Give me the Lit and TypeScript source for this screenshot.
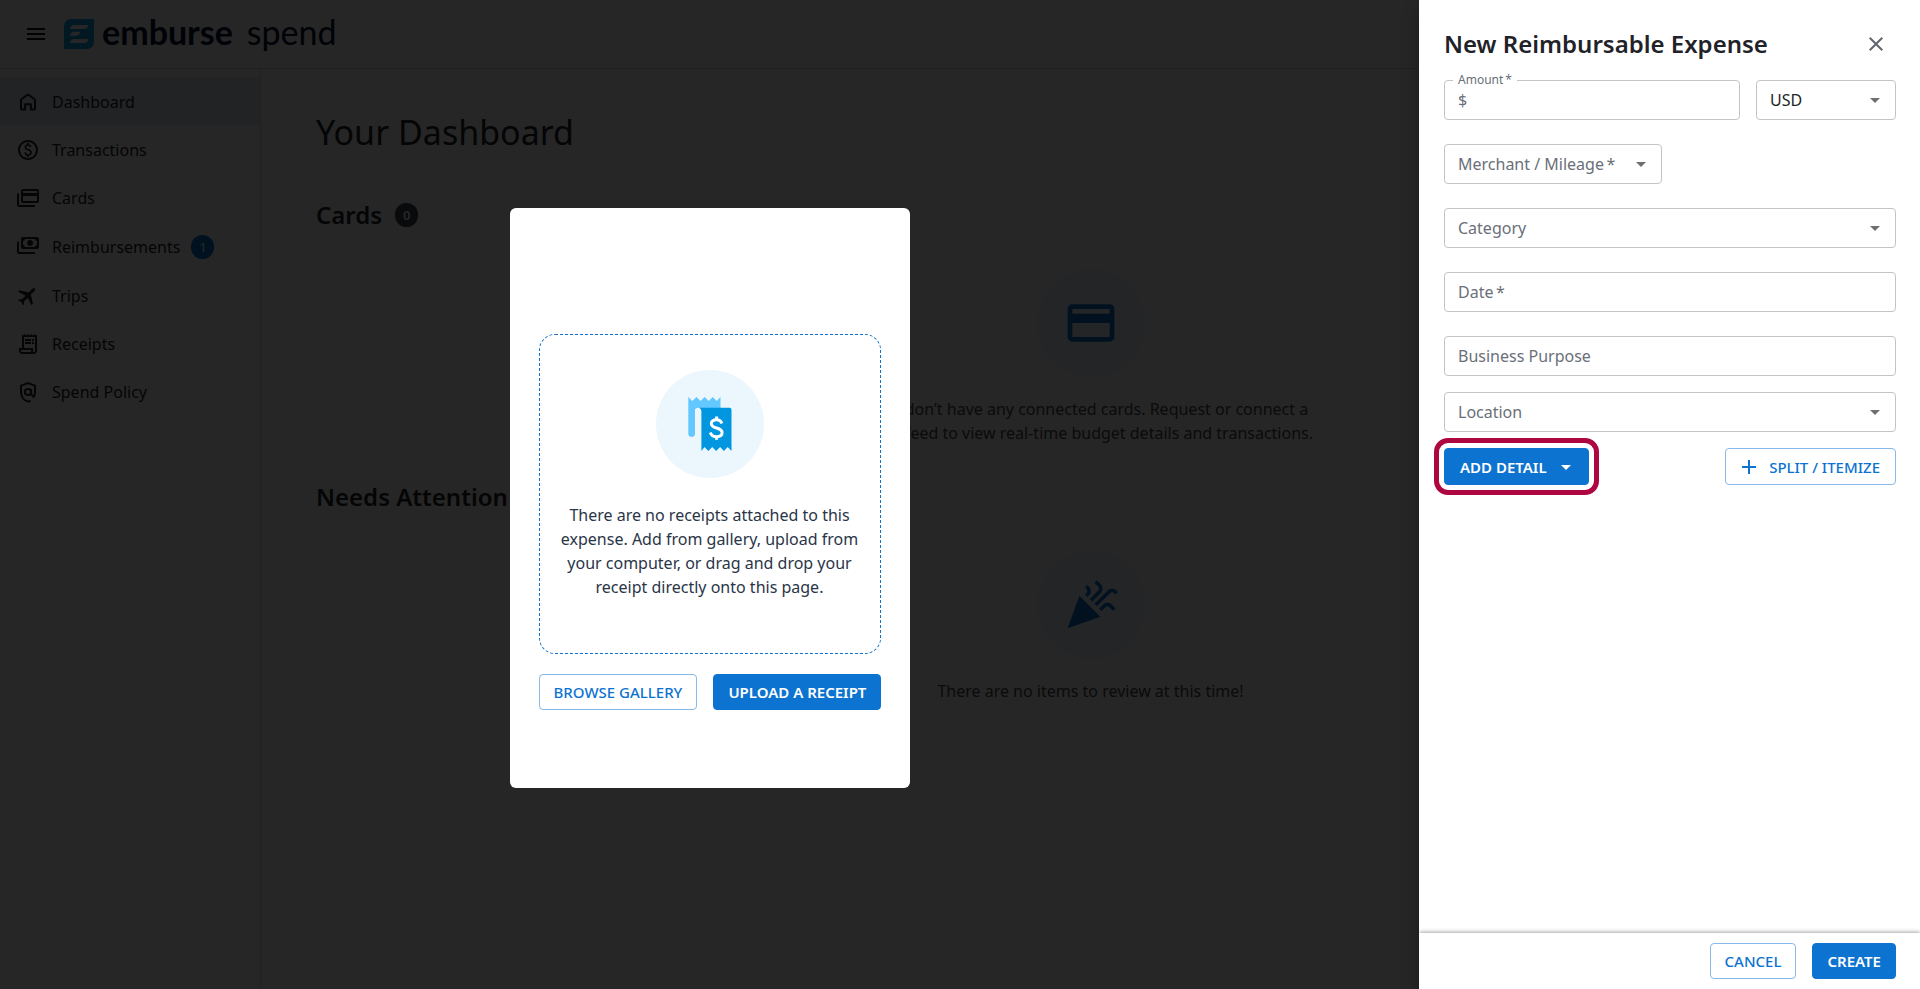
import { LitElement, html, css, svg, nothing } from "lit";
import { customElement, property } from "lit/decorators.js";

const PAID =
  "M12 2C6.48 2 2 6.48 2 12s4.48 10 10 10 10-4.48 10-10S17.52 2 12 2zm0 18c-4.41 0-8-3.59-8-8s3.59-8 8-8 8 3.59 8 8-3.59 8-8 8zm.89-8.9c-1.78-.59-2.64-.96-2.64-1.9 0-1.02 1.11-1.39 1.81-1.39 1.31 0 1.79.99 1.9 1.34l1.58-.67c-.15-.44-.82-1.91-2.66-2.23V5h-1.75v1.26c-2.6.56-2.62 2.85-2.62 2.96 0 2.27 2.25 2.91 3.35 3.31 1.58.56 2.28 1.07 2.28 2.03 0 1.13-1.05 1.61-1.98 1.61-1.82 0-2.34-1.87-2.4-2.09l-1.66.67c.63 2.19 2.28 2.78 3.02 2.96V19h1.75v-1.24c.52-.09 3.02-.59 3.02-3.22.01-1.39-.6-2.61-3-3.44z";
const FLIGHT =
  "M21 16v-2l-8-5V3.5c0-.83-.67-1.5-1.5-1.5S10 2.67 10 3.5V9l-8 5v2l8-2.5V19l-2 1.5V22l3.5-1 3.5 1v-1.5L13 19v-5.5l8 2.5z";
const RECEIPT =
  "M19.5 3.5 18 2l-1.5 1.5L15 2l-1.5 1.5L12 2l-1.5 1.5L9 2 7.5 3.5 6 2v14H3v3c0 1.66 1.34 3 3 3h12c1.66 0 3-1.34 3-3V2l-1.5 1.5zM15 20H6c-.55 0-1-.45-1-1v-1h10v2zm4-1c0 .55-.45 1-1 1s-1-.45-1-1v-3H8V5h11v14zM9 7h6v2H9zM16 7h2v2h-2zM9 10h6v2H9zM16 10h2v2h-2z";
const CREDIT_CARD =
  "M20 4H4c-1.11 0-1.99.89-1.99 2L2 18c0 1.11.89 2 2 2h16c1.11 0 2-.89 2-2V6c0-1.11-.89-2-2-2zm0 14H4v-6h16v6zm0-10H4V6h16v2z";
const CELEBRATION =
  "M2 22l14-5-9-9zM14.53 12.53l5.59-5.59c.49-.49 1.28-.49 1.77 0l.59.59 1.06-1.06-.59-.59c-1.07-1.07-2.82-1.07-3.89 0l-5.59 5.59 1.06 1.06zM10.06 6.88l-.59.59 1.06 1.06.59-.59c1.07-1.07 1.07-2.82 0-3.89l-.59-.59-1.06 1.07.59.59c.48.48.48 1.28 0 1.76zM17.06 11.88l-1.59 1.59 1.06 1.06 1.59-1.59c.49-.49 1.28-.49 1.77 0l1.61 1.61 1.06-1.06-1.61-1.61c-1.08-1.07-2.82-1.07-3.9 0zM15.06 5.88l-3.59 3.59 1.06 1.06 3.59-3.59c1.07-1.07 1.07-2.82 0-3.89l-1.59-1.59-1.06 1.06 1.59 1.59c.49.49.49 1.29 0 1.77z";

const glyphs: Record<string, unknown> = {
  menu: svg`<path d="M3 18h18v-2H3v2zm0-5h18v-2H3v2zm0-7v2h18V6H3z"/>`,
  home: svg`<path fill="none" stroke="currentColor" stroke-width="2" stroke-linejoin="round" d="M5 18.6V10.4q0-.9.7-1.4l5.4-4q.9-.6 1.8 0l5.4 4q.7.5.7 1.4v8.2q0 .9-.9.9H14.9V14.2H9.1V19.5H5.9Q5 19.5 5 18.6z"/>`,
  paid: svg`<path d=${PAID}/>`,
  cards: svg`<g fill="none" stroke="currentColor" stroke-width="2"><rect x="6" y="4" width="16" height="12" rx="1"/><path d="M2 7.500V19q0 1 1 1H19"/></g><path d="M6 7h16v3H6z"/>`,
  cash: svg`<g fill="none" stroke="currentColor" stroke-width="2"><path d="M2 6.500V17q0 1 1 1H19"/></g><path fill-rule="evenodd" d="M7 2h14a2 2 0 0 1 2 2v8a2 2 0 0 1-2 2H7a2 2 0 0 1-2-2V4a2 2 0 0 1 2-2zM9 4a2 2 0 0 1-2 2v4a2 2 0 0 1 2 2h10a2 2 0 0 1 2-2V6a2 2 0 0 1-2-2z"/><circle cx="14" cy="8" r="3"/>`,
  flight: svg`<path transform="rotate(45 12 12)" d=${FLIGHT}/>`,
  receipt: svg`<path d=${RECEIPT}/>`,
  policy: svg`<g fill="none" stroke="currentColor" stroke-width="2"><path d="M14.500 20.600Q13.300 21.400 12 21.600C7.500 20.300 5 16.200 5 12V5.600L12 3l7 2.600V12c0 1.800-.4 3.400-1.200 4.900L14.600 13.800"/><circle cx="12" cy="12" r="3.100"/><path d="M15.100 9v5"/></g>`,
  card: svg`<path d=${CREDIT_CARD}/>`,
  party: svg`<path d=${CELEBRATION}/>`,
  caret: svg`<path d="M7 10l5 5 5-5z"/>`,
  plus: svg`<path d="M19 13h-6v6h-2v-6H5v-2h6V5h2v6h6z"/>`,
  close: svg`<path d="M19 6.410 17.590 5 12 10.590 6.410 5 5 6.410 10.590 12 5 17.590 6.410 19 12 13.410 17.590 19 19 17.590 13.410 12z"/>`,
};

const icon = (name: string, cls = "") =>
  html`<svg class="icon ${cls}" viewBox="0 0 24 24" aria-hidden="true">${glyphs[name]}</svg>`;

const required = html`<span aria-hidden="true">&thinsp;*</span>`;

@customElement("form-field")
class FormField extends LitElement {
  @property() label = "";
  @property() kind: "text" | "select" = "text";
  @property() value = "";
  @property() prefixText = "";
  @property({ type: Boolean }) required = false;
  @property({ type: Boolean }) floating = false;
  @property({ type: Boolean }) bare = false;

  static styles = css`
    :host {
      display: block;
    }
    .field {
      position: relative;
      display: grid;
      grid-template-columns: auto 1fr;
      align-items: center;
      box-sizing: border-box;
      height: 40px;
      border: 1px solid #c4c4c4;
      border-radius: 4px;
    }
    .label,
    .control {
      grid-row: 1;
      font: 16px/24px "Noto Sans", sans-serif;
    }
    .label {
      grid-column: 1;
      padding: 0 14px 0 13px;
      color: #6a6f79;
      pointer-events: none;
      white-space: nowrap;
      z-index: 1;
    }
    .label.float {
      position: absolute;
      grid-area: auto;
      left: 8px;
      top: -9px;
      padding: 0 5px;
      background: #fff;
      font-size: 12px;
      line-height: 16px;
    }
    .prefix {
      grid-row: 1;
      grid-column: 1;
      padding-left: 13px;
      font: 16px/24px "Noto Sans", sans-serif;
      color: #6a6f79;
    }
    .control {
      grid-column: 1 / -1;
      width: 100%;
      min-width: 0;
      height: 38px;
      box-sizing: border-box;
      margin: 0;
      padding: 0 13px;
      border: 0;
      outline: 0;
      border-radius: 4px;
      background: transparent;
      color: #212529;
      appearance: none;
    }
    .control.after {
      grid-column: 2;
    }
    .caret {
      grid-row: 1;
      grid-column: 2;
      justify-self: end;
      width: 24px;
      height: 24px;
      margin-right: 8px;
      fill: #6f6f6f;
      pointer-events: none;
    }
  `;

  render() {
    return html`
      <div class="field">
        ${this.bare
          ? nothing
          : html`<label class="label ${this.floating ? "float" : ""}" for="c"
              >${this.label}${this.required ? required : nothing}</label
            >`}
        ${this.prefixText ? html`<span class="prefix">${this.prefixText}</span>` : nothing}
        ${this.kind === "select"
          ? html`<select class="control" id="c" aria-label=${this.bare ? this.label : nothing}>
                <option>${this.value}</option>
              </select>
              ${icon("caret", "caret")}`
          : html`<input
              class="control ${this.prefixText ? "after" : ""}"
              id="c"
              type="text"
              ?required=${this.required}
            />`}
      </div>
    `;
  }
}

const NAV = [
  { label: "Dashboard", icon: "home", active: true },
  { label: "Transactions", icon: "paid" },
  { label: "Cards", icon: "cards" },
  { label: "Reimbursements", icon: "cash", count: 1 },
  { label: "Trips", icon: "flight" },
  { label: "Receipts", icon: "receipt" },
  { label: "Spend Policy", icon: "policy" },
];

@customElement("app-root")
class AppRoot extends LitElement {
  static styles = css`
    :host {
      display: block;
      height: 100vh;
      position: relative;
      overflow: hidden;
      background: #fff;
      color: #212529;
      font: 16px/24px "Noto Sans", sans-serif;
    }
    h1,
    h2,
    p {
      margin: 0;
    }
    .icon {
      display: block;
      flex: none;
      width: 24px;
      height: 24px;
      fill: currentColor;
    }
    .page {
      display: grid;
      grid-template: auto 1fr / 261px 1fr;
      height: 100%;
    }
    .topbar {
      grid-column: 1 / -1;
      display: flex;
      align-items: center;
      gap: 16px;
      height: 68px;
      padding-left: 24px;
      border-bottom: 1px solid #dcdcdc;
    }
    .iconbtn {
      display: block;
      padding: 0;
      border: 0;
      background: none;
      color: #111;
    }
    .brand {
      display: flex;
      align-items: center;
      gap: 8px;
      color: #00112e;
      text-decoration: none;
      font: 34px/40px Lato, sans-serif;
    }
    .wordmark {
      display: flex;
      gap: 14px;
      padding-bottom: 4px;
    }
    .wordmark strong {
      font-weight: 700;
    }
    .mark {
      display: block;
      width: 30px;
      height: 30px;
    }
    .nav {
      display: flex;
      flex-direction: column;
      padding-top: 9px;
      border-right: 1px solid #dcdcdc;
    }
    .navlink {
      display: flex;
      align-items: center;
      gap: 12px;
      min-height: 48px;
      padding-left: 16px;
      color: #212529;
      text-decoration: none;
    }
    .navlink.active {
      background: #dfe6ef;
    }
    .navlink.counted {
      min-height: 50px;
    }
    .badge {
      display: inline-block;
      min-width: 23px;
      height: 24px;
      border-radius: 12px;
      background: #0d73d0;
      color: #fff;
      font-size: 13px;
      line-height: 24px;
      text-align: center;
    }
    .badge.dark {
      background: #3b424d;
      font-weight: 600;
    }
    .navlink .badge {
      margin-left: -1px;
    }
    .main {
      display: flex;
      flex-direction: column;
      gap: 36px;
      padding-top: 39px;
    }
    .title {
      padding: 0 0 7px 55px;
      font-weight: 400;
      font-size: 34px;
      line-height: 48px;
    }
    .section {
      display: flex;
      flex-direction: column;
      gap: 38px;
    }
    .section-title {
      display: flex;
      align-items: center;
      gap: 13px;
      padding-left: 55px;
      font-weight: 600;
      font-size: 24px;
      line-height: 32px;
    }
    .empty {
      display: flex;
      flex-direction: column;
      align-items: center;
      gap: 20px;
      color: #4a4a4a;
      text-align: center;
    }
    .disc {
      display: grid;
      place-items: center;
      width: 108px;
      height: 108px;
      border-radius: 50%;
      background: #ebf6fd;
      color: #0d73d0;
    }
    .big {
      width: 56px;
      height: 56px;
    }
    .overlay {
      position: absolute;
      inset: 0;
      display: grid;
      grid-template-columns: 1fr 501px;
      background: rgba(0, 0, 0, 0.85);
    }
    .stage {
      display: grid;
      place-items: center;
      padding-top: 7px;
    }
    .dialog {
      display: flex;
      flex-direction: column;
      gap: 20px;
      box-sizing: border-box;
      width: 400px;
      padding: 126px 29px 78px;
      border-radius: 6px;
      background: #fff;
    }
    .drop {
      display: flex;
      flex-direction: column;
      align-items: center;
      gap: 25px;
      padding: 35px 16px 54px;
      border: 1px dashed #0d73d0;
      border-radius: 16px;
      color: #2a3547;
      text-align: center;
    }
    .art {
      width: 108px;
      height: 108px;
    }
    .row {
      display: flex;
      justify-content: space-between;
      gap: 16px;
    }
    .btn {
      display: inline-flex;
      align-items: center;
      justify-content: center;
      box-sizing: border-box;
      height: 36px;
      padding: 0 14px;
      border: 1px solid #86b9e7;
      border-radius: 4px;
      background: #fff;
      color: #0d73d0;
      font: 500 15px/24px "Noto Sans", sans-serif;
      text-transform: uppercase;
      white-space: nowrap;
    }
    .btn.solid {
      border-color: #0d73d0;
      background: #0d73d0;
      color: #fff;
      font-weight: 600;
    }
    .drawer {
      display: flex;
      flex-direction: column;
      background: #fff;
      box-shadow: 0 8px 16px rgba(0, 0, 0, 0.3);
    }
    .head {
      display: flex;
      align-items: center;
      justify-content: space-between;
      padding: 24px 32px 16px 25px;
    }
    .head h2 {
      font-weight: 600;
      font-size: 24px;
      line-height: 40px;
      color: #1f2329;
    }
    .head .iconbtn {
      color: #60656f;
    }
    .form {
      display: flex;
      flex-direction: column;
      gap: 16px;
      flex: 1;
      padding: 0 24px 0 25px;
    }
    .fields {
      display: flex;
      flex-direction: column;
      align-items: flex-start;
      gap: 24px;
    }
    .fields > * {
      align-self: stretch;
    }
    .fields > .fit {
      align-self: flex-start;
    }
    .amounts {
      display: grid;
      grid-template-columns: 1fr 140px;
      gap: 16px;
    }
    .btn.tall {
      gap: 8px;
      height: 37px;
      padding: 0 15px 0 11px;
    }
    .btn.tall.solid {
      gap: 7px;
      padding: 0 10px 0 15px;
      outline: 5px solid #ad0640;
      outline-offset: 5px;
    }
    .foot {
      display: flex;
      justify-content: flex-end;
      gap: 16px;
      padding: 10px 24px;
      box-shadow: 0 -1px 4px rgba(0, 0, 0, 0.35);
      clip-path: inset(-8px 0 0 0);
    }
  `;

  private empty(glyph: string, text: unknown) {
    return html`<div class="empty">
      <span class="disc">${icon(glyph, "big")}</span>
      <p>${text}</p>
    </div>`;
  }

  render() {
    return html`
      <div class="page">
        <header class="topbar">
          <button class="iconbtn" aria-label="Menu">${icon("menu")}</button>
          <a class="brand" href="#">
            <svg class="mark" viewBox="0 0 30 30" aria-hidden="true">
              <path fill="#0e9fe0" d="M7 0H30V23a7 7 0 0 1-7 7H0V7a7 7 0 0 1 7-7z" />
              <path
                fill="#fff"
                d="M6 10q.6-3.700 4-4H24.500q-.6 3.700-4 4zM6 16.800q.6-3.700 4-4H16.200q-.6 3.700-4 4zM6 24q.6-3.700 4-4H24.500q-.6 3.700-4 4z"
              />
            </svg>
            <span class="wordmark"><strong>emburse</strong><span>spend</span></span>
          </a>
        </header>
        <nav class="nav">
          ${NAV.map(
            (n) => html`<a class="navlink ${n.active ? "active" : ""} ${n.count ? "counted" : ""}" href="#">
              ${icon(n.icon)}<span>${n.label}</span>${n.count ? html`<span class="badge">${n.count}</span>` : nothing}
            </a>`
          )}
        </nav>
        <main class="main">
          <h1 class="title">Your Dashboard</h1>
          <section class="section">
            <h2 class="section-title">Cards <span class="badge dark">0</span></h2>
            ${this.empty(
              "card",
              html`You don’t have any connected cards. Request or connect a<br />card feed to view real-time budget
                details and transactions.`
            )}
          </section>
          <section class="section">
            <h2 class="section-title">Needs Attention</h2>
            ${this.empty("party", "There are no items to review at this time!")}
          </section>
        </main>
      </div>

      <div class="overlay">
        <div class="stage">
          <div class="dialog" role="dialog" aria-label="Receipts">
            <div class="drop">
              <svg class="art" viewBox="0 0 108 108" aria-hidden="true">
                <circle cx="54" cy="54" r="54" fill="#ebf6fd" />
                <path
                  fill="#62c8ff"
                  d="M32.300 27l4 4 4.200-4 4 4 4.200-4 4 4 4-4 4 4 3.800-4V39H39V63.500a3.350 3.350 0 0 1-6.700 0z"
                />
                <path fill="#ebf6fd" d="M39 82V41a3.200 3.200 0 0 1 6.400 0V82z" />
                <path
                  fill="#0096e0"
                  d="M43 37.700H73.500q2 0 2 2V81l-3.800-4-3.800 4-3.800-4-4 4-3.800-4-4 4-3.800-4L45.400 81V41q0-2.600-2.400-3.300z"
                />
                <path
                  fill="none"
                  stroke="#fff"
                  stroke-width="3"
                  d="M65.800 53.500C65 50.500 63 49.700 60.500 49.700c-3 0-5.200 1.500-5.200 4 0 5.500 10.800 3 10.800 8.800 0 2.700-2.300 4.200-5.500 4.200s-5.300-1.300-6.300-4.200M60.600 46.500v3M60.600 66.700v3"
                />
              </svg>
              <p>
                There are no receipts attached to this expense. Add from gallery, upload from your computer, or drag and
                drop your receipt directly onto this page.
              </p>
            </div>
            <div class="row">
              <button class="btn">Browse Gallery</button>
              <button class="btn solid">Upload a Receipt</button>
            </div>
          </div>
        </div>

        <aside class="drawer">
          <div class="head">
            <h2>New Reimbursable Expense</h2>
            <button class="iconbtn" aria-label="Close">${icon("close")}</button>
          </div>
          <div class="form">
            <div class="fields">
              <div class="amounts">
                <form-field label="Amount" prefixText="$" required floating></form-field>
                <form-field label="Currency" kind="select" value="USD" bare></form-field>
              </div>
              <form-field class="fit" label="Merchant / Mileage" kind="select" required></form-field>
              <form-field label="Category" kind="select"></form-field>
              <form-field label="Date" required></form-field>
              <form-field label="Business Purpose"></form-field>
            </div>
            <form-field label="Location" kind="select"></form-field>
            <div class="row">
              <button class="btn tall solid">Add Detail ${icon("caret")}</button>
              <button class="btn tall">${icon("plus")} Split / Itemize</button>
            </div>
          </div>
          <footer class="foot">
            <button class="btn">Cancel</button>
            <button class="btn solid">Create</button>
          </footer>
        </aside>
      </div>
    `;
  }
}
